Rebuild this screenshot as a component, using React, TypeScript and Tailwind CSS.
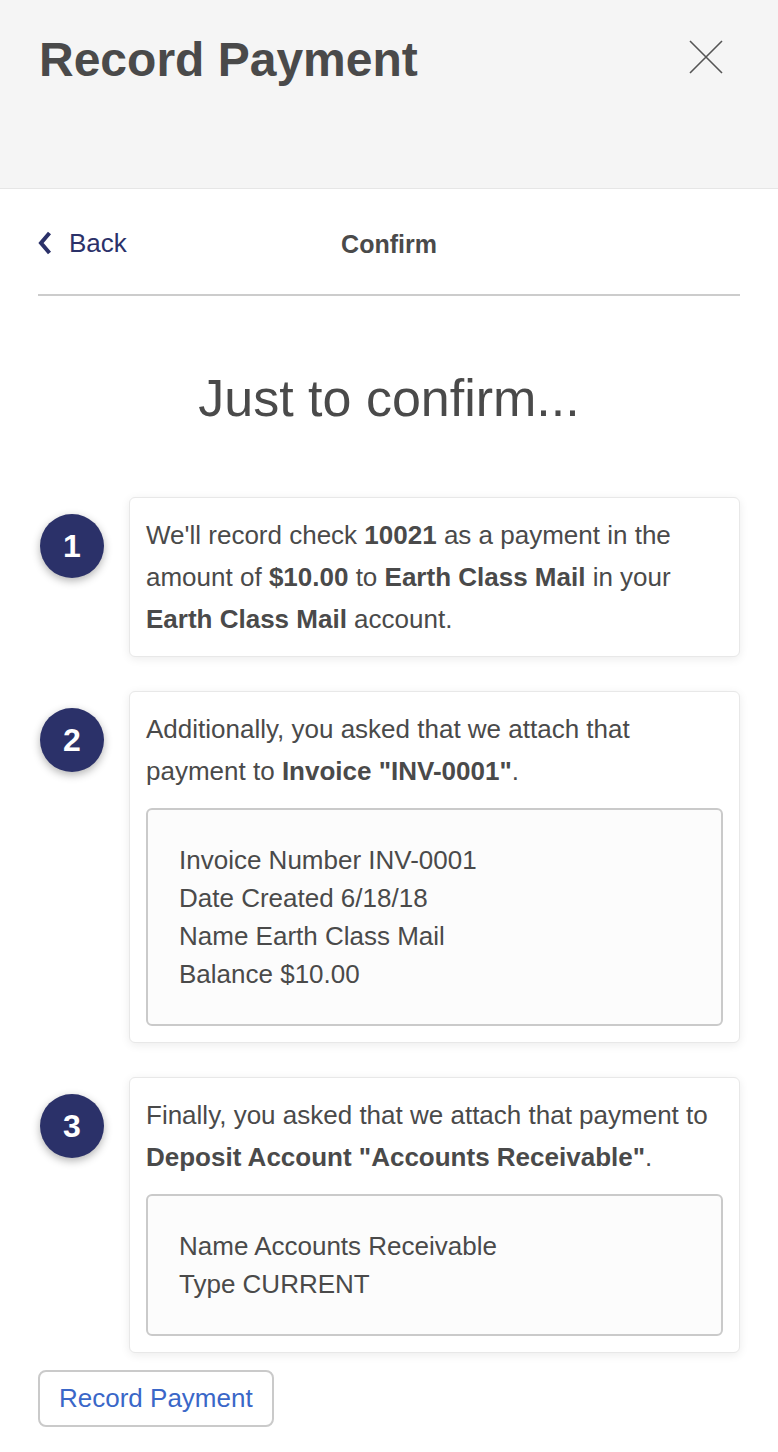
const StepCircle = ({ n }: { n: number }) => (
  <div className="ml-[2px] mt-[17px] flex h-16 w-16 shrink-0 items-center justify-center rounded-full bg-[#2b3169] text-[32px] font-bold text-white shadow-[0_3px_8px_rgba(0,0,0,0.3)]">
    {n}
  </div>
)

const Card = ({ children }: { children: React.ReactNode }) => (
  <div className="flex-1 rounded-[6px] border border-[#e8e8e8] bg-white p-4 text-[26px] leading-[42px] text-[#4a4a4a] shadow-[0_2px_10px_rgba(0,0,0,0.08)]">
    {children}
  </div>
)

const DetailBox = ({ lines }: { lines: string[] }) => (
  <div className="mt-4 rounded-[6px] border-2 border-[#cacaca] bg-[#fcfcfc] p-[31px] text-[26px] leading-[38px] text-[#4a4a4a]">
    {lines.map((l) => (
      <div key={l}>{l}</div>
    ))}
  </div>
)

const App = () => {
  return (
    <div className="min-h-screen bg-white font-['Liberation_Sans',Arial,sans-serif]">
      <div className="flex h-[189px] items-start justify-between border-b border-[#e6e6e6] bg-[#f5f5f5] pl-[39px] pr-[55px] pt-[36px]">
        <h1 className="text-[48px] font-bold leading-none text-[#4a4a4a]">
          Record Payment
        </h1>
        <svg
          className="mt-[4px]"
          width="34"
          height="34"
          viewBox="0 0 34 34"
          fill="none"
          stroke="#555"
          strokeWidth="1.6"
        >
          <path d="M1 1 L33 33 M33 1 L1 33" />
        </svg>
      </div>

      <div className="px-[38px]">
        <div className="relative flex h-[107px] items-center border-b-2 border-[#cccccc] pt-[3px]">
          <button className="flex items-center gap-[17px] text-[26px] text-[#2b3169]">
            <svg width="14" height="24" viewBox="0 0 14 24" fill="none" stroke="#2b3169" strokeWidth="4" strokeLinejoin="miter">
              <path d="M11.5 2 L3 12 L11.5 22" />
            </svg>
            Back
          </button>
          <div className="absolute left-1/2 top-[3px] flex h-full -translate-x-1/2 items-center text-[25px] font-bold text-[#4a4a4a]">
            Confirm
          </div>
        </div>

        <h2 className="mt-[71px] text-center text-[52px] leading-[62px] text-[#4a4a4a]">
          Just to confirm...
        </h2>

        <div className="mt-[68px] flex flex-col gap-[34px]">
          <div className="flex items-start gap-[25px]">
            <StepCircle n={1} />
            <Card>
              We'll record check <b>10021</b> as a payment in the amount of{' '}
              <b>$10.00</b> to <b>Earth Class Mail</b> in your{' '}
              <b>Earth Class Mail</b> account.
            </Card>
          </div>

          <div className="flex items-start gap-[25px]">
            <StepCircle n={2} />
            <Card>
              Additionally, you asked that we attach that payment to{' '}
              <b>Invoice "INV-0001"</b>.
              <DetailBox
                lines={[
                  'Invoice Number INV-0001',
                  'Date Created 6/18/18',
                  'Name Earth Class Mail',
                  'Balance $10.00',
                ]}
              />
            </Card>
          </div>

          <div className="flex items-start gap-[25px]">
            <StepCircle n={3} />
            <Card>
              Finally, you asked that we attach that payment to{' '}
              <b>Deposit Account "Accounts Receivable"</b>.
              <DetailBox lines={['Name Accounts Receivable', 'Type CURRENT']} />
            </Card>
          </div>
        </div>

        <button className="mb-6 mt-[17px] h-[57px] rounded-[8px] border-2 border-[#cacaca] bg-white px-[19px] text-[26px] text-[#3a67c8]">
          Record Payment
        </button>
      </div>
    </div>
  )
}

export default App
